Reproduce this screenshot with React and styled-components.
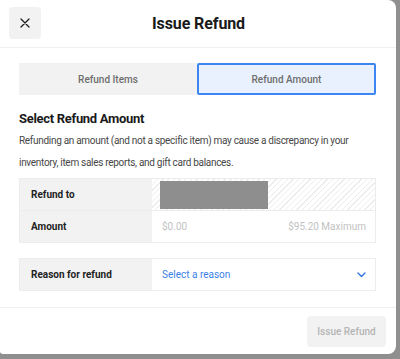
import React from 'react'
import styled, { createGlobalStyle } from 'styled-components'

const GlobalStyle = createGlobalStyle`
    html, body {
        margin: 0;
        padding: 0;
        background: #8f8f8f;
    }
    body {
        font-family: Roboto, "Noto Sans", sans-serif;
        -webkit-font-smoothing: antialiased;
    }
`;

function CloseIcon() {
    return (
        <svg width="10" height="10" viewBox="0 0 10 10">
            <path d="M1 1 L9 9 M9 1 L1 9" stroke="#1f1f1f" strokeWidth="1.3" strokeLinecap="round" />
        </svg>
    )
}

function Chevron() {
    return (
        <svg width="9" height="6" viewBox="0 0 9 6">
            <path d="M1 1 L4.5 4.5 L8 1" stroke="#2f74e0" strokeWidth="1.4" fill="none" strokeLinecap="round" strokeLinejoin="round" />
        </svg>
    )
}

function App() {
    return <Page>
        <GlobalStyle />
        <Modal>
            <Header>
                <CloseButton><CloseIcon /></CloseButton>
                <Title>Issue Refund</Title>
            </Header>

            <Body>
                <Tabs>
                    <Tab>Refund Items</Tab>
                    <Tab active>Refund Amount</Tab>
                </Tabs>

                <Heading>Select Refund Amount</Heading>
                <Text>
                    Refunding an amount (and not a specific item) may cause a discrepancy in your
                    inventory, item sales reports, and gift card balances.
                </Text>

                <Table>
                    <Row>
                        <Label>Refund to</Label>
                        <Cell hatched>
                            <Masked />
                        </Cell>
                    </Row>
                    <Row>
                        <Label>Amount</Label>
                        <Cell>
                            <Muted>$0.00</Muted>
                            <Muted>$95.20 Maximum</Muted>
                        </Cell>
                    </Row>
                </Table>

                <Table gap={15}>
                    <Row>
                        <Label>Reason for refund</Label>
                        <Cell>
                            <Select>Select a reason</Select>
                            <Chevron />
                        </Cell>
                    </Row>
                </Table>
            </Body>

            <Footer>
                <SubmitButton disabled>Issue Refund</SubmitButton>
            </Footer>
        </Modal>
    </Page>
}

export default App

const Page = styled.div`
    width: 400px;
    height: 359px;
    overflow: hidden;
`;

const Modal = styled.div`
    width: 396px;
    height: 354px;
    background: #fff;
    border-radius: 0 8px 8px 3px;
    display: flex;
    flex-direction: column;
    overflow: hidden;
`;

const Header = styled.div`
    position: relative;
    flex-shrink: 0;
    height: 47px;
    display: flex;
    align-items: center;
    justify-content: center;
    border-bottom: 1px solid #f0f0f0;
`;

const CloseButton = styled.button`
    position: absolute;
    left: 9px;
    top: 7px;
    width: 32px;
    height: 32px;
    border: none;
    border-radius: 4px;
    background: #f2f2f2;
    display: flex;
    align-items: center;
    justify-content: center;
    padding: 0;
`;

const Title = styled.h1`
    margin: 0 0 1px;
    font-size: 16px;
    font-weight: 700;
    color: #1a1a1a;
    letter-spacing: -0.1px;
    padding-left: 1px;
`;

const Body = styled.div`
    flex-shrink: 0;
    padding: 15px 20px 16px 19px;
    border-bottom: 1px solid #f0f0f0;
`;

const Tabs = styled.div`
    display: grid;
    grid-template-columns: 178px 1fr;
    height: 32px;
`;

const Tab = styled.div`
    display: flex;
    align-items: center;
    justify-content: center;
    font-size: 10px;
    font-weight: 500;
    color: #6e6e6e;
    background: ${p => p.active ? '#e8f1fd' : '#f2f2f2'};
    border: ${p => p.active ? '2px solid #3d86f2' : 'none'};
    border-radius: ${p => p.active ? '2px' : '0'};
`;

const Heading = styled.h2`
    margin: 15px 0 0;
    font-size: 13px;
    line-height: 17px;
    font-weight: 700;
    letter-spacing: -0.3px;
    color: #1a1a1a;
`;

const Text = styled.p`
    margin: 3px 0 0;
    font-size: 10px;
    line-height: 22px;
    letter-spacing: -0.3px;
    color: #474747;
`;

const Table = styled.div`
    margin-top: ${p => p.gap || 4}px;
    border: 1px solid #ececec;
`;

const Row = styled.div`
    display: grid;
    grid-template-columns: 132px 1fr;
    height: 31px;
    & + & {
        border-top: 1px solid #ececec;
    }
`;

const Label = styled.div`
    background: #f2f2f2;
    display: flex;
    align-items: center;
    padding-left: 11px;
    font-size: 10px;
    font-weight: 700;
    color: #1f1f1f;
`;

const Cell = styled.div`
    display: flex;
    align-items: center;
    justify-content: space-between;
    padding: 0 9px 0 10px;
    background: ${p => p.hatched
        ? 'repeating-linear-gradient(-45deg, #fff 0 3px, #ececec 3px 4px)'
        : '#fff'};
`;

const Masked = styled.div`
    width: 108px;
    height: 28px;
    margin-left: -2px;
    background: #8e8e8e;
    margin-right: auto;
`;

const Muted = styled.span`
    font-size: 10px;
    color: #c2c2c2;
`;

const Select = styled.span`
    font-size: 10px;
    color: #3b7fe6;
`;

const Footer = styled.div`
    flex: 1;
    display: flex;
    align-items: flex-start;
    justify-content: flex-end;
    padding: 8px 10px 0 0;
`;

const SubmitButton = styled.button`
    width: 79px;
    height: 31px;
    border: none;
    border-radius: 4px;
    background: #f2f2f2;
    color: #b5b5b5;
    font-family: inherit;
    font-size: 10px;
    font-weight: 500;
    padding: 0;
`;
